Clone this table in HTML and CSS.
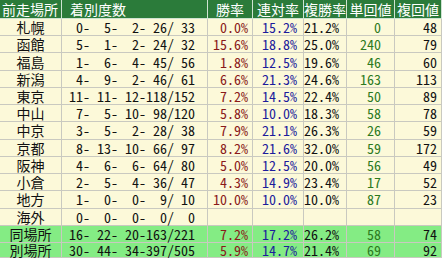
FILE: index.html
```html
<!DOCTYPE html>
<html lang="ja">
<head>
<meta charset="utf-8">
<link rel="stylesheet" href="styles.css">
</head>
<body>
<div class="stats" role="table">
  <div class="row head" role="row"><div class="c h-place">前走場所</div><div class="c h-count">着別度数</div><div class="c">勝率</div><div class="c">連対率</div><div class="c">複勝率</div><div class="c">単回値</div><div class="c">複回値</div></div>
  <div class="row" role="row"><div class="c place">札幌</div><div class="c num cnt"> 0-  5-  2- 26/ 33</div><div class="c num win">0.0%</div><div class="c num ren">15.2%</div><div class="c num fk">21.2%</div><div class="c num tan">0</div><div class="c num">48</div></div>
  <div class="row" role="row"><div class="c place">函館</div><div class="c num cnt"> 5-  1-  2- 24/ 32</div><div class="c num win">15.6%</div><div class="c num ren">18.8%</div><div class="c num fk">25.0%</div><div class="c num tan">240</div><div class="c num">79</div></div>
  <div class="row" role="row"><div class="c place">福島</div><div class="c num cnt"> 1-  6-  4- 45/ 56</div><div class="c num win">1.8%</div><div class="c num ren">12.5%</div><div class="c num fk">19.6%</div><div class="c num tan">46</div><div class="c num">60</div></div>
  <div class="row" role="row"><div class="c place">新潟</div><div class="c num cnt"> 4-  9-  2- 46/ 61</div><div class="c num win">6.6%</div><div class="c num ren">21.3%</div><div class="c num fk">24.6%</div><div class="c num tan">163</div><div class="c num">113</div></div>
  <div class="row" role="row"><div class="c place">東京</div><div class="c num cnt">11- 11- 12-118/152</div><div class="c num win">7.2%</div><div class="c num ren">14.5%</div><div class="c num fk">22.4%</div><div class="c num tan">50</div><div class="c num">89</div></div>
  <div class="row" role="row"><div class="c place">中山</div><div class="c num cnt"> 7-  5- 10- 98/120</div><div class="c num win">5.8%</div><div class="c num ren">10.0%</div><div class="c num fk">18.3%</div><div class="c num tan">58</div><div class="c num">78</div></div>
  <div class="row" role="row"><div class="c place">中京</div><div class="c num cnt"> 3-  5-  2- 28/ 38</div><div class="c num win">7.9%</div><div class="c num ren">21.1%</div><div class="c num fk">26.3%</div><div class="c num tan">26</div><div class="c num">59</div></div>
  <div class="row" role="row"><div class="c place">京都</div><div class="c num cnt"> 8- 13- 10- 66/ 97</div><div class="c num win">8.2%</div><div class="c num ren">21.6%</div><div class="c num fk">32.0%</div><div class="c num tan">59</div><div class="c num">172</div></div>
  <div class="row" role="row"><div class="c place">阪神</div><div class="c num cnt"> 4-  6-  6- 64/ 80</div><div class="c num win">5.0%</div><div class="c num ren">12.5%</div><div class="c num fk">20.0%</div><div class="c num tan">56</div><div class="c num">49</div></div>
  <div class="row" role="row"><div class="c place">小倉</div><div class="c num cnt"> 2-  5-  4- 36/ 47</div><div class="c num win">4.3%</div><div class="c num ren">14.9%</div><div class="c num fk">23.4%</div><div class="c num tan">17</div><div class="c num">52</div></div>
  <div class="row" role="row"><div class="c place">地方</div><div class="c num cnt"> 1-  0-  0-  9/ 10</div><div class="c num win">10.0%</div><div class="c num ren">10.0%</div><div class="c num fk">10.0%</div><div class="c num tan">87</div><div class="c num">23</div></div>
  <div class="row" role="row"><div class="c place">海外</div><div class="c num cnt"> 0-  0-  0-  0/  0</div><div class="c num win"></div><div class="c num ren"></div><div class="c num fk"></div><div class="c num tan"></div><div class="c num"></div></div>
  <div class="row total" role="row"><div class="c place">同場所</div><div class="c num cnt">16- 22- 20-163/221</div><div class="c num win">7.2%</div><div class="c num ren">17.2%</div><div class="c num fk">26.2%</div><div class="c num tan">58</div><div class="c num">74</div></div>
  <div class="row total" role="row"><div class="c place">別場所</div><div class="c num cnt">30- 44- 34-397/505</div><div class="c num win">5.9%</div><div class="c num ren">14.7%</div><div class="c num fk">21.4%</div><div class="c num tan">69</div><div class="c num">92</div></div>
</div>
</body>
</html>
```

FILE: styles.css
```css
html, body {
  margin: 0;
  padding: 0;
  background: #ffffff;
}

.stats {
  display: grid;
  grid-template-columns: 62px 146px 45px 51px 43px 48px 47px;
  grid-template-rows: 19px repeat(13, 1fr);
  width: 442px;
  height: 258px;
  font-family: "Noto Sans CJK JP", sans-serif;
  font-size: 14px;
  color: #111;
  background: #fcf9d9;
}

.row {
  display: contents;
}

.c {
  display: flex;
  align-items: center;
  justify-content: center;
  box-sizing: border-box;
  min-height: 0;
  border-right: 1px solid #c9c9c0;
  border-bottom: 1px solid #c9c9c0;
  line-height: 14px;
  white-space: pre;
}

.head .c {
  background: #2b7b3a;
  color: #ffffff;
  border-right-color: #cfe3d2;
  border-bottom-color: #cfe3d2;
}

.head .h-place {
  justify-content: flex-start;
  padding-left: 2px;
}

.head .h-count {
  justify-content: flex-start;
  padding-left: 8px;
}

.num {
  justify-content: flex-end;
  padding-right: 4px;
  font-feature-settings: "hwid" 1;
}

.cnt { padding-right: 12px; }
.ren { padding-right: 6px; }
.fk { padding-right: 7px; }
.tan { padding-right: 13px; }

.win { color: #8a1a1a; }
.ren { color: #1c1c9c; }
.tan { color: #2d7a1e; }

.total .c {
  background: #84ec84;
}
```
